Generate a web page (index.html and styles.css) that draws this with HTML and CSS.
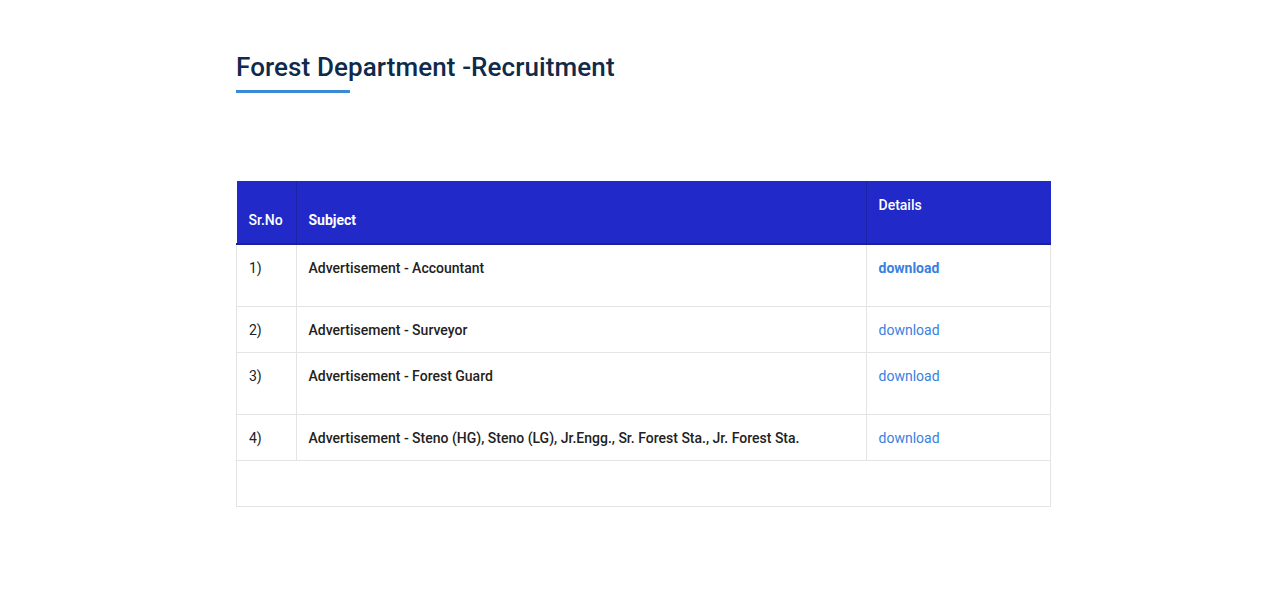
FILE: index.html
```html
<!DOCTYPE html>
<html lang="en">
<head>
<meta charset="utf-8">
<title>Forest Department -Recruitment</title>
<link rel="stylesheet" href="styles.css">
</head>
<body>
<main class="page">
  <h1 class="title">Forest Department -Recruitment</h1>
  <div class="title-bar"></div>
  <table class="rec-table">
    <thead>
      <tr>
        <th class="col-no">Sr.No</th>
        <th class="col-subj">Subject</th>
        <th class="col-det">Details</th>
      </tr>
    </thead>
    <tbody>
      <tr class="tall">
        <td>1)</td>
        <td class="subj">Advertisement - Accountant</td>
        <td><a class="dl bold" href="#">download</a></td>
      </tr>
      <tr>
        <td>2)</td>
        <td class="subj">Advertisement - Surveyor</td>
        <td><a class="dl" href="#">download</a></td>
      </tr>
      <tr class="tall">
        <td>3)</td>
        <td class="subj">Advertisement - Forest Guard</td>
        <td><a class="dl" href="#">download</a></td>
      </tr>
      <tr>
        <td>4)</td>
        <td class="subj">Advertisement - Steno (HG), Steno (LG), Jr.Engg., Sr. Forest Sta., Jr. Forest Sta.</td>
        <td><a class="dl" href="#">download</a></td>
      </tr>
      <tr class="empty">
        <td colspan="3"></td>
      </tr>
    </tbody>
  </table>
</main>
</body>
</html>
```
FILE: styles.css
```css
html, body {
  margin: 0;
  padding: 0;
  background: #ffffff;
}
body {
  font-family: Roboto, "Liberation Sans", Arial, sans-serif;
  color: #222222;
}
.page {
  width: 815px;
  margin: 0 auto 0 236px;
  padding-top: 52px;
}
.title {
  margin: 0;
  font-size: 26px;
  font-weight: 500;
  line-height: 31px;
  letter-spacing: 0.1px;
  color: #102a4c;
}
.title-bar {
  width: 114px;
  height: 3px;
  background: #3a8ad6;
  margin-top: 7px;
}
.rec-table {
  margin-top: 88px;
  width: 815px;
  border-collapse: collapse;
  font-size: 14px;
  line-height: 22px;
}
.rec-table th {
  background: #2129c8;
  color: #ffffff;
  text-align: left;
  font-weight: 500;
  padding: 12px 12px;
  height: 38px;
  border-left: 1px solid #1a22a8;
  border-bottom: 2px solid #1a2296;
}
.rec-table th:first-child { border-left: none; }
.rec-table th.col-no {
  width: 35px;
  vertical-align: bottom;
  font-weight: 500;
}
.rec-table th.col-subj {
  vertical-align: bottom;
  font-weight: 700;
}
.rec-table th.col-det {
  width: 160px;
  vertical-align: top;
  padding-top: 13px;
  padding-bottom: 11px;
}
.rec-table td {
  padding: 12px 12px 11px;
  vertical-align: top;
  border: 1px solid #e4e4e4;
  border-top: none;
}
.rec-table tr.tall td {
  padding-bottom: 27px;
}
.rec-table td.subj {
  font-weight: 500;
}
.rec-table tr.empty td {
  height: 22px;
}
.dl {
  color: #3a80e0;
  text-decoration: none;
}
.dl.bold {
  font-weight: 700;
}
```
